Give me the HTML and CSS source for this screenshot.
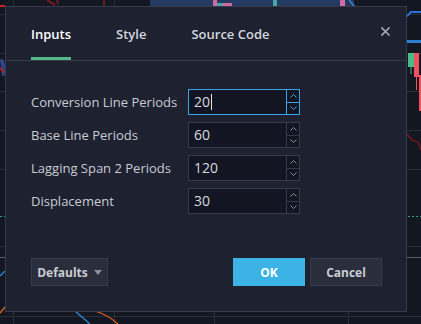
FILE: index.html
```html
<!DOCTYPE html>
<html>
<head>
<meta charset="utf-8">
<link rel="stylesheet" href="styles.css">
</head>
<body>
<div class="chart">
  <svg class="chart-svg" width="421" height="324" viewBox="0 0 421 324">
    <rect width="421" height="324" fill="#131722"/>
    <rect x="150" y="0" width="204" height="7" fill="#233a63"/>
    <g stroke="#2a2e39" stroke-width="1">
      <line x1="13.5" y1="0" x2="13.5" y2="324"/>
      <line x1="114.5" y1="0" x2="114.5" y2="324"/>
      <line x1="214.5" y1="0" x2="214.5" y2="324"/>
      <line x1="348.5" y1="0" x2="348.5" y2="324"/>
      <line x1="0" y1="14.5" x2="421" y2="14.5"/>
      <line x1="0" y1="53.5" x2="421" y2="53.5"/>
      <line x1="0" y1="91.5" x2="421" y2="91.5"/>
      <line x1="0" y1="130.5" x2="421" y2="130.5"/>
      <line x1="0" y1="169.5" x2="421" y2="169.5"/>
      <line x1="0" y1="246.5" x2="421" y2="246.5"/>
      <line x1="0" y1="316.5" x2="421" y2="316.5"/>
    </g>
    <line x1="0" y1="216.5" x2="421" y2="216.5" stroke="#3d9b7e" stroke-dasharray="2 2"/>
    <line x1="0" y1="257.5" x2="421" y2="257.5" stroke="#5a5d68"/>
    <rect x="0" y="5" width="5" height="2" fill="#c22"/>
    <path d="M47 0 L55 5 M57 0 L58 4" stroke="#8a1c1c" stroke-width="1.5" fill="none"/>
    <path d="M104 0 L104 6" stroke="#8a1c1c" stroke-width="1.5"/>
    <rect x="213" y="0" width="4" height="6" fill="#d06a9f"/>
    <rect x="217" y="3" width="6" height="3" fill="#4aa5a5"/>
    <rect x="223" y="3" width="9" height="3" fill="#d06a9f"/>
    <rect x="273" y="0" width="4" height="6" fill="#4aa5a5"/>
    <rect x="340" y="0" width="5" height="6" fill="#d06a9f"/>
    <path d="M349 0 L355 7" stroke="#2b8bd8" stroke-width="1.5"/>
    <path d="M0 60 Q4 56 5 66 L5 75 L2 76 Z" fill="#3b4fa0" opacity="0.8"/>
    <path d="M0 68 L4 72" stroke="#a22" stroke-width="2"/>
    <path d="M406 17 L411 12 L421 12" stroke="#2b6fd8" stroke-width="2" fill="none"/>
    <rect x="406" y="40" width="15" height="3" fill="#2b7fd0"/>
    <rect x="408" y="53" width="6" height="14" fill="#4dbb87"/>
    <line x1="411" y1="67" x2="411" y2="74" stroke="#4dbb87"/>
    <rect x="414" y="53" width="5" height="24" fill="#f0525f"/>
    <line x1="416.5" y1="77" x2="416.5" y2="90" stroke="#f0525f"/>
    <rect x="419" y="75" width="2" height="36" fill="#f0525f"/>
    <path d="M406 133 L412 140 L418 142 L421 150" stroke="#6e1a1a" stroke-width="1.5" fill="none"/>
    <path d="M0 313 L5 307" stroke="#e0651e" stroke-width="1.3"/>
    <path d="M0 276 L5 271" stroke="#2b8bd8" stroke-width="1.3"/>
    <path d="M75 311 L90 324" stroke="#2b8bd8" stroke-width="1.3"/>
    <path d="M95 311 Q108 315 118 324" stroke="#e0651e" stroke-width="1.3" fill="none"/>
  </svg>

  <div class="dialog">
    <div class="header">
      <div class="tabs">
        <div class="tab active">Inputs</div>
        <div class="tab">Style</div>
        <div class="tab">Source Code</div>
      </div>
      <div class="close">
        <svg class="close-icon" width="9" height="9" viewBox="0 0 9 9"><path d="M1 1 L8 8 M8 1 L1 8" stroke="#a3a6af" stroke-width="1.7" stroke-linecap="square"/></svg>
      </div>
    </div>

    <div class="body">
      <div class="row">
        <div class="label">Conversion Line Periods</div>
        <div class="field focused">
          <div class="value">20<span class="caret"></span></div>
          <div class="spin">
            <div class="arrow"><svg width="7" height="4" viewBox="0 0 7 4"><path d="M0.5 3.5 L3.5 0.5 L6.5 3.5" stroke="#3aa5e6" fill="none"/></svg></div>
            <div class="arrow"><svg width="7" height="4" viewBox="0 0 7 4"><path d="M0.5 0.5 L3.5 3.5 L6.5 0.5" stroke="#3aa5e6" fill="none"/></svg></div>
          </div>
        </div>
      </div>
      <div class="row">
        <div class="label">Base Line Periods</div>
        <div class="field">
          <div class="value">60</div>
          <div class="spin">
            <div class="arrow"><svg width="7" height="4" viewBox="0 0 7 4"><path d="M0.5 3.5 L3.5 0.5 L6.5 3.5" stroke="#8c8f99" fill="none"/></svg></div>
            <div class="arrow"><svg width="7" height="4" viewBox="0 0 7 4"><path d="M0.5 0.5 L3.5 3.5 L6.5 0.5" stroke="#8c8f99" fill="none"/></svg></div>
          </div>
        </div>
      </div>
      <div class="row">
        <div class="label">Lagging Span 2 Periods</div>
        <div class="field">
          <div class="value">120</div>
          <div class="spin">
            <div class="arrow"><svg width="7" height="4" viewBox="0 0 7 4"><path d="M0.5 3.5 L3.5 0.5 L6.5 3.5" stroke="#8c8f99" fill="none"/></svg></div>
            <div class="arrow"><svg width="7" height="4" viewBox="0 0 7 4"><path d="M0.5 0.5 L3.5 3.5 L6.5 0.5" stroke="#8c8f99" fill="none"/></svg></div>
          </div>
        </div>
      </div>
      <div class="row">
        <div class="label">Displacement</div>
        <div class="field">
          <div class="value">30</div>
          <div class="spin">
            <div class="arrow"><svg width="7" height="4" viewBox="0 0 7 4"><path d="M0.5 3.5 L3.5 0.5 L6.5 3.5" stroke="#8c8f99" fill="none"/></svg></div>
            <div class="arrow"><svg width="7" height="4" viewBox="0 0 7 4"><path d="M0.5 0.5 L3.5 3.5 L6.5 0.5" stroke="#8c8f99" fill="none"/></svg></div>
          </div>
        </div>
      </div>
    </div>

    <div class="footer">
      <button class="btn defaults">Defaults <span class="tri"></span></button>
      <div class="actions">
        <button class="btn ok">OK</button>
        <button class="btn cancel">Cancel</button>
      </div>
    </div>
  </div>
</div>
</body>
</html>
```

FILE: styles.css
```css
* { box-sizing: border-box; }
html, body {
  margin: 0;
  padding: 0;
  background: #131722;
  font-family: "Open Sans", "Noto Sans", sans-serif;
}
.chart {
  position: relative;
  width: 421px;
  height: 324px;
  overflow: hidden;
}
.chart-svg {
  position: absolute;
  left: 0;
  top: 0;
}
.dialog {
  position: absolute;
  left: 5px;
  top: 6px;
  width: 402px;
  height: 306px;
  background: #1e2130;
  border: 1px solid #363a4b;
  display: flex;
  flex-direction: column;
}
.header {
  height: 54px;
  border-bottom: 1px solid #363a4b;
  display: flex;
  justify-content: space-between;
  padding: 0 16px 0 25px;
}
.tabs {
  display: flex;
  gap: 45px;
}
.tab {
  height: 53px;
  padding-top: 18px;
  font-size: 13px;
  font-weight: 600;
  color: #d4d7de;
  border-bottom: 3px solid transparent;
  line-height: 18px;
}
.tab.active {
  color: #ffffff;
  border-bottom-color: #53b987;
}
.close {
  padding-top: 20px;
}
.close-icon {
  display: block;
}
.body {
  padding: 28px 0 0 25px;
  display: flex;
  flex-direction: column;
  gap: 7px;
}
.row {
  display: grid;
  grid-template-columns: 157px 112px;
  align-items: center;
}
.label {
  font-size: 13px;
  color: #c9ccd3;
}
.field {
  height: 26px;
  border: 1px solid #363a4b;
  background: #131522;
  display: flex;
}
.field.focused {
  border-color: #3aa5e6;
}
.value {
  flex: 1;
  font-size: 14px;
  line-height: 24px;
  padding-left: 5px;
  color: #d6d9df;
  display: flex;
  align-items: center;
}
.caret {
  display: inline-block;
  width: 1px;
  height: 16px;
  background: #e0e3ea;
  margin-left: 1px;
}
.spin {
  width: 13px;
  border-left: 1px solid #363a4b;
  display: flex;
  flex-direction: column;
}
.field.focused .spin,
.field.focused .arrow + .arrow {
  border-color: #3aa5e6;
}
.arrow {
  flex: 1;
  display: flex;
  align-items: center;
  justify-content: center;
}
.arrow + .arrow {
  border-top: 1px solid #363a4b;
}
.footer {
  margin-top: auto;
  padding: 0 24px 25px 25px;
  display: flex;
  justify-content: space-between;
  align-items: center;
}
.actions {
  display: flex;
  gap: 5px;
}
.btn {
  height: 28px;
  font-family: "Open Sans", "Noto Sans", sans-serif;
  font-size: 12px;
  font-weight: 700;
  border: 1px solid #363a4b;
  background: #2a2d3b;
  color: #c9ccd3;
  padding: 0;
  cursor: pointer;
}
.defaults {
  width: 77px;
  display: flex;
  align-items: center;
  justify-content: center;
  gap: 6px;
}
.tri {
  width: 0;
  height: 0;
  border-left: 4.5px solid transparent;
  border-right: 4.5px solid transparent;
  border-top: 5px solid #8c8f99;
}
.ok {
  width: 72px;
  background: #3bb3e4;
  border-color: #3bb3e4;
  color: #ffffff;
}
.cancel {
  width: 72px;
}
```
